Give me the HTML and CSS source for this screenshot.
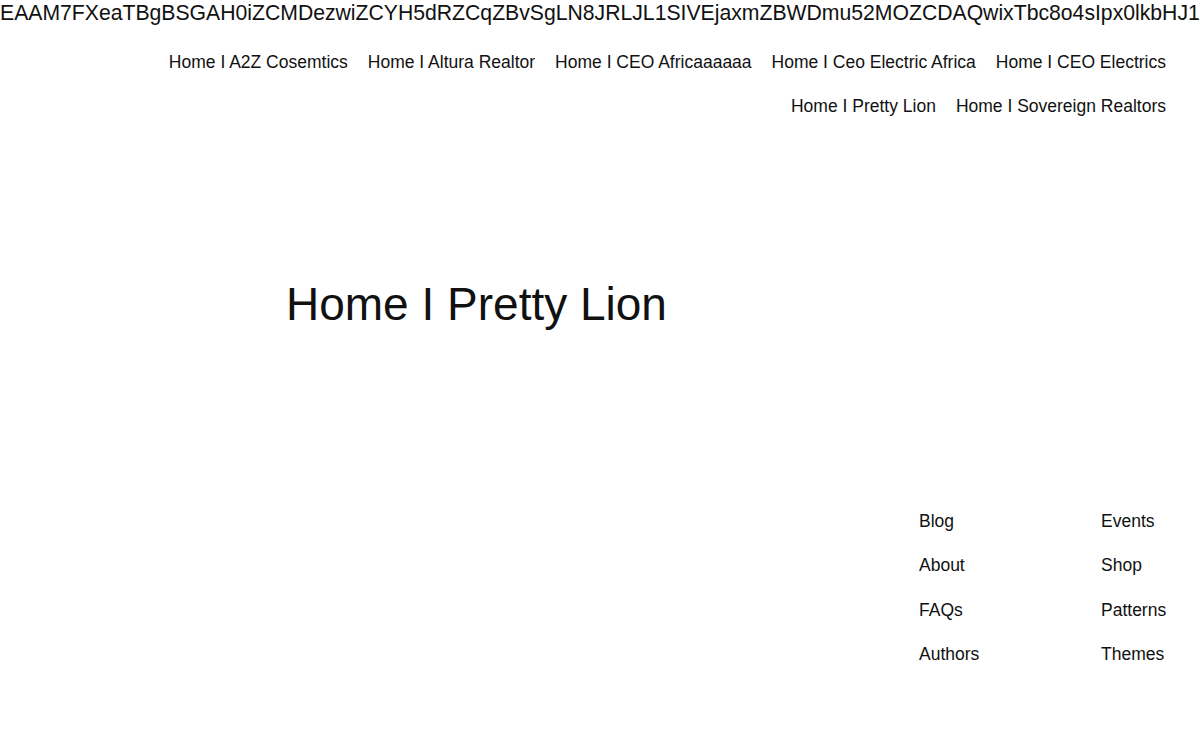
FILE: index.html
```html
<!DOCTYPE html>
<html lang="en">
<head>
<meta charset="utf-8">
<title>Home I Pretty Lion</title>
<link rel="stylesheet" href="styles.css">
</head>
<body>
<div class="page">
  <header class="site-header">
    <p class="token">EAAM7FXeaTBgBSGAH0iZCMDezwiZCYH5dRZCqZBvSgLN8JRLJL1SIVEjaxmZBWDmu52MOZCDAQwixTbc8o4sIpx0lkbHJ1ZBq7wZCnZAQ9xZCZBrT3ZCZA</p>
    <nav class="main-nav">
      <ul class="nav-list">
        <li><a href="#">Home I A2Z Cosemtics</a></li>
        <li><a href="#">Home I Altura Realtor</a></li>
        <li><a href="#">Home I CEO Africaaaaaa</a></li>
        <li><a href="#">Home I Ceo Electric Africa</a></li>
        <li><a href="#">Home I CEO Electrics</a></li>
        <li><a href="#">Home I Pretty Lion</a></li>
        <li><a href="#">Home I Sovereign Realtors</a></li>
      </ul>
    </nav>
  </header>
  <main class="content">
    <h1 class="page-title">Home I Pretty Lion</h1>
  </main>
  <footer class="site-footer">
    <ul class="footer-col col-a">
      <li><a href="#">Blog</a></li>
      <li><a href="#">About</a></li>
      <li><a href="#">FAQs</a></li>
      <li><a href="#">Authors</a></li>
    </ul>
    <ul class="footer-col col-b">
      <li><a href="#">Events</a></li>
      <li><a href="#">Shop</a></li>
      <li><a href="#">Patterns</a></li>
      <li><a href="#">Themes</a></li>
    </ul>
  </footer>
</div>
</body>
</html>
```

FILE: styles.css
```css
html, body {
  margin: 0;
  padding: 0;
  background: #ffffff;
  color: #111111;
  font-family: "Liberation Sans", Arial, sans-serif;
  overflow: hidden;
}

a {
  color: #111111;
  text-decoration: none;
}

ul {
  list-style: none;
  margin: 0;
  padding: 0;
}

.page {
  width: 1200px;
  display: flex;
  flex-direction: column;
}

.site-header {
  display: flex;
  flex-direction: column;
}

.token {
  margin: 0;
  font-size: 21.2px;
  line-height: 25px;
  white-space: nowrap;
  overflow: hidden;
}

.main-nav {
  margin-top: 15px;
  padding: 0 34px 0 150px;
}

.nav-list {
  display: flex;
  flex-wrap: wrap;
  justify-content: flex-end;
  column-gap: 20px;
}

.nav-list li {
  font-size: 17.5px;
  line-height: 44px;
}

.content {
  margin-top: 149px;
  padding-left: 286px;
}

.page-title {
  margin: 0;
  font-size: 46px;
  font-weight: 400;
  line-height: 55px;
}

.site-footer {
  margin-top: 167px;
  padding-right: 34px;
  display: flex;
  justify-content: flex-end;
}

.footer-col li {
  font-size: 17.5px;
  line-height: 44.3px;
}

.col-a {
  width: 182px;
}

.col-b {
  width: 65px;
}
```
